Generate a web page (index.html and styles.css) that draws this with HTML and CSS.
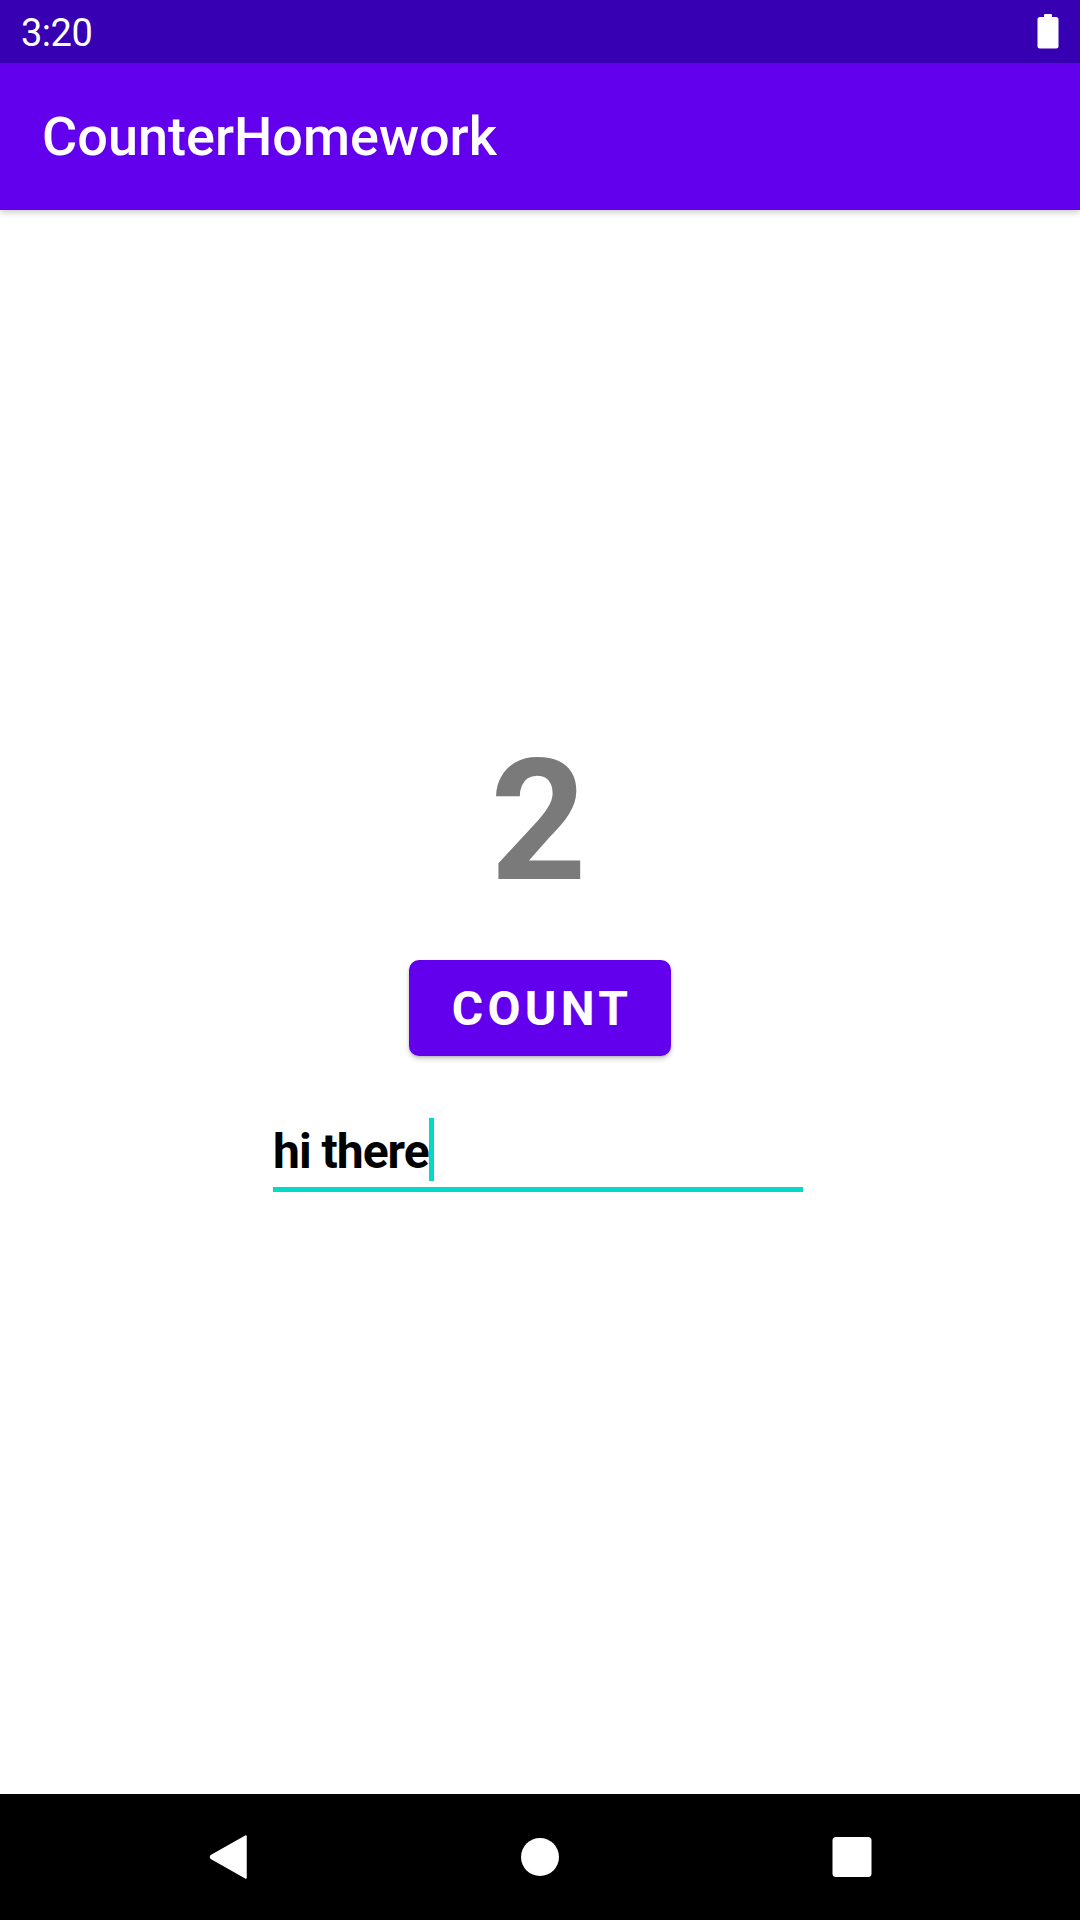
FILE: index.html
```html
<!DOCTYPE html>
<html>
<head>
<meta charset="utf-8">
<link rel="stylesheet" href="styles.css">
</head>
<body>
<div class="screen">
  <div class="status-bar">
    <span class="time">3:20</span>
    <svg class="battery" width="22" height="35" viewBox="0 0 22 35">
      <rect x="7" y="0" width="8" height="4" rx="1" fill="#fff"/>
      <rect x="0.5" y="3" width="21" height="31.5" rx="2.5" fill="#fff"/>
    </svg>
  </div>
  <header class="app-bar">
    <h1 class="title">CounterHomework</h1>
  </header>
  <main class="content">
    <div class="count">2</div>
    <div class="btn">COUNT</div>
    <div class="field">
      <span class="field-text">hi there</span>
      <span class="cursor"></span>
    </div>
  </main>
  <nav class="nav-bar">
    <div class="nav-slot">
      <svg width="38" height="44" viewBox="0 0 38 44"><path d="M37 1 L37 43 L2.5 23.6 Q0.5 22 2.5 20.4 Z" fill="#fff" stroke="#fff" stroke-width="1.5" stroke-linejoin="round"/></svg>
    </div>
    <div class="nav-slot">
      <svg width="40" height="40" viewBox="0 0 40 40"><circle cx="20" cy="20" r="19" fill="#fff"/></svg>
    </div>
    <div class="nav-slot">
      <svg width="40" height="40" viewBox="0 0 40 40"><rect x="0.5" y="0" width="39" height="40" rx="3.5" fill="#fff"/></svg>
    </div>
  </nav>
</div>
</body>
</html>
```

FILE: styles.css
```css
html, body {
  margin: 0;
  padding: 0;
  background: #fff;
}

.screen {
  width: 1080px;
  height: 1920px;
  display: flex;
  flex-direction: column;
  font-family: Roboto, "Noto Sans", sans-serif;
  overflow: hidden;
}

.status-bar {
  height: 63px;
  flex: none;
  background: #3700B3;
  display: flex;
  align-items: center;
  justify-content: space-between;
  padding: 0 21px 0 21px;
  box-sizing: border-box;
  color: #fff;
}

.time {
  font-size: 38px;
  letter-spacing: -0.5px;
  line-height: 1;
  margin-top: 2px;
}

.battery {
  display: block;
  align-self: flex-start;
  margin-top: 14px;
}

.app-bar {
  height: 147px;
  flex: none;
  background: #6200EE;
  display: flex;
  align-items: center;
  padding-left: 42px;
  box-shadow: 0 3px 6px rgba(0, 0, 0, 0.18);
  position: relative;
  z-index: 1;
}

.title {
  margin: 0;
  color: #fff;
  font-size: 54px;
  font-weight: 500;
  line-height: 1.172;
}

.content {
  flex: 1;
  display: flex;
  flex-direction: column;
  align-items: center;
  padding-top: 528px;
}

.count {
  font-size: 168px;
  font-weight: 700;
  line-height: 1;
  height: 168px;
  color: #7a7a7a;
  margin-right: 3px;
}

.btn {
  margin-top: 54px;
  width: 262px;
  height: 96px;
  box-sizing: border-box;
  background: #6200EE;
  border-radius: 10px;
  color: #fff;
  font-size: 48px;
  font-weight: 700;
  letter-spacing: 4.3px;
  display: flex;
  align-items: center;
  justify-content: center;
  padding-left: 4px;
  box-shadow: 0 3px 5px rgba(0, 0, 0, 0.2), 0 1px 2px rgba(0, 0, 0, 0.12);
}

.field {
  margin-top: 62px;
  margin-left: -4px;
  width: 530px;
  display: flex;
  align-items: flex-start;
  padding-bottom: 6px;
  border-bottom: 5px solid #03DAC5;
}

.field-text {
  font-size: 48px;
  font-weight: 700;
  line-height: 56px;
  margin-top: 6px;
  color: #000;
  letter-spacing: -1px;
}

.cursor {
  width: 5px;
  height: 63px;
  background: #03DAC5;
}

.nav-bar {
  height: 126px;
  flex: none;
  background: #000;
  display: flex;
  align-items: center;
  justify-content: center;
  gap: 212px;
}

.nav-slot {
  width: 100px;
  display: flex;
  justify-content: center;
  align-items: center;
}

.nav-slot svg {
  display: block;
}
```
